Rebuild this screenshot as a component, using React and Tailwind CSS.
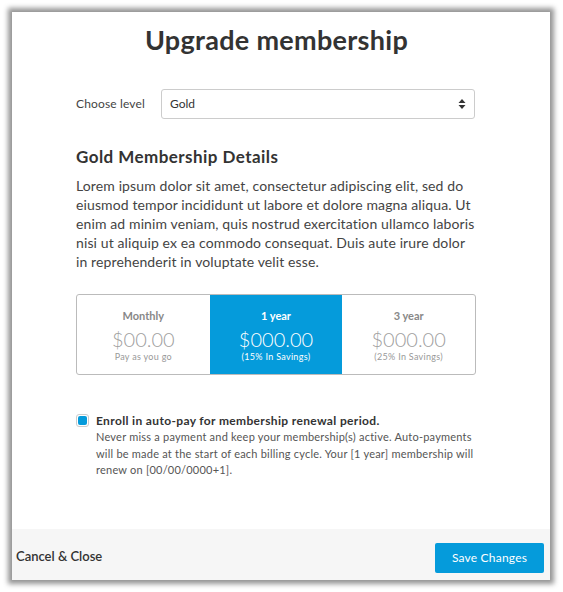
import React from "react";

export default function App() {
  return (
    <div className="w-[563px] h-[592px] bg-white pl-[12px] pt-[12px] font-['Lato',sans-serif]">
      <div className="w-[538px] h-[568px] bg-white flex flex-col shadow-[0_0_5px_4px_rgba(0,0,0,0.42)]">
        <div className="pl-16 pt-[12px]">
          <h1 className="w-[401px] text-center text-[27px] leading-[32px] font-bold tracking-[0.3px] text-[#333]">
            Upgrade membership
          </h1>
          <div className="w-[399px] mt-[33px] flex items-center">
            <span className="w-[85px] text-[12px] tracking-[0.15px] text-[#444]">Choose level</span>
            <div className="flex-1 h-[30px] border border-[#ccc] rounded-[3px] flex items-center justify-between pl-[8px] pr-[8px]">
              <span className="text-[12px] text-[#333]">Gold</span>
              <svg width="8" height="12" viewBox="0 0 8 12">
                <path d="M4 1 L7.5 5 L0.5 5 Z" fill="#333" />
                <path d="M4 11 L7.5 7 L0.5 7 Z" fill="#333" />
              </svg>
            </div>
          </div>
          <h2 className="mt-[27px] text-[17px] leading-[22px] font-bold tracking-[0.45px] text-[#333]">
            Gold Membership Details
          </h2>
          <p className="w-[401px] mt-[8px] text-[14px] leading-[19px] tracking-[0.12px] text-[#444]">
            Lorem ipsum dolor sit amet, consectetur adipiscing elit, sed do eiusmod tempor incididunt ut labore et dolore magna aliqua. Ut enim ad minim veniam, quis nostrud exercitation ullamco laboris nisi ut aliquip ex ea commodo consequat. Duis aute irure dolor in reprehenderit in voluptate velit esse.
          </p>
          <div className="w-[400px] h-[81px] mt-[23px] border border-[#bbb] rounded-[3px] grid grid-cols-3 overflow-hidden">
            <div className="flex flex-col items-center pt-[14px]">
              <span className="text-[11px] leading-[14px] font-bold text-[#888]">Monthly</span>
              <span className="mt-[4px] text-[20px] leading-[24px] font-light text-[#a0a0a0]">$00.00</span>
              <span className="text-[9px] leading-[12px] tracking-[0.3px] text-[#999]">Pay as you go</span>
            </div>
            <div className="flex flex-col items-center pt-[14px] bg-[#059bdb]">
              <span className="text-[11px] leading-[14px] font-bold text-white">1 year</span>
              <span className="mt-[4px] text-[20px] leading-[24px] font-light text-white">$000.00</span>
              <span className="text-[9px] leading-[12px] tracking-[0.3px] text-white">(15% In Savings)</span>
            </div>
            <div className="flex flex-col items-center pt-[14px]">
              <span className="text-[11px] leading-[14px] font-bold text-[#888]">3 year</span>
              <span className="mt-[4px] text-[20px] leading-[24px] font-light text-[#a0a0a0]">$000.00</span>
              <span className="text-[9px] leading-[12px] tracking-[0.3px] text-[#999]">(25% In Savings)</span>
            </div>
          </div>
          <div className="w-[406px] mt-[37px] flex">
            <div className="w-[13px] h-[13px] mt-[2px] rounded-[3px] border border-[#ccc] bg-white p-[1px] shrink-0">
              <div className="w-full h-full rounded-[2px] bg-[#059bdb]" />
            </div>
            <div className="ml-[7px]">
              <div className="text-[12px] leading-[17px] font-bold tracking-[0.35px] text-[#333]">
                Enroll in auto-pay for membership renewal period.
              </div>
              <p className="text-[11px] leading-[16.5px] tracking-[0.22px] text-[#555]">
                Never miss a payment and keep your membership(s) active. Auto-payments will be made at the start of each billing cycle. Your [1 year] membership will renew on [00/00/0000+1].
              </p>
            </div>
          </div>
        </div>
        <div className="mt-auto h-[51px] bg-[#f6f6f6] flex items-center justify-between pl-[4px] pr-[6px] pt-[4px]">
          <span className="text-[13px] font-semibold text-[#333]">Cancel &amp; Close</span>
          <button className="w-[109px] h-[30px] mt-[2px] rounded-[2px] bg-[#059bdb] text-white text-[12px] tracking-[0.2px]">
            Save Changes
          </button>
        </div>
      </div>
    </div>
  );
}
